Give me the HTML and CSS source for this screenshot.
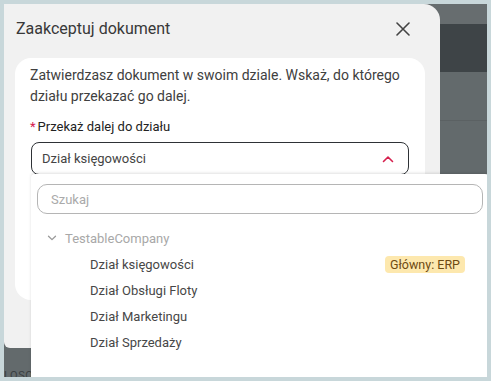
FILE: index.html
```html
<!DOCTYPE html>
<html lang="pl">
<head>
  <meta charset="UTF-8">
  <title>Zaakceptuj dokument</title>
  <link rel="stylesheet" href="styles.css">
</head>
<body>
  <div class="screen">
    <span class="behind-text">LOSO</span>

    <div class="modal">
      <div class="modal-header">
        <h2 class="modal-title">Zaakceptuj dokument</h2>
        <svg class="close" width="14" height="14" viewBox="0 0 14 14">
          <path d="M1 1 L13 13 M13 1 L1 13" stroke="#444" stroke-width="1.6" fill="none" stroke-linecap="round"/>
        </svg>
      </div>

      <div class="card">
        <p class="intro">Zatwierdzasz dokument w swoim dziale. Wskaż, do którego działu przekazać go dalej.</p>

        <label class="field-label"><span class="req">*</span>Przekaż dalej do działu</label>
        <div class="select">
          <span>Dział księgowości</span>
          <svg width="12" height="8" viewBox="0 0 12 8">
            <path d="M1.5 6.5 L6 2 L10.5 6.5" stroke="#d6204e" stroke-width="1.6" fill="none" stroke-linecap="round" stroke-linejoin="round"/>
          </svg>
        </div>
      </div>
    </div>

    <div class="dropdown">
      <div class="search">Szukaj</div>
      <div class="tree">
        <div class="tree-group">
          <svg width="10" height="6" viewBox="0 0 10 6">
            <path d="M1.5 1.2 L5 4.6 L8.5 1.2" stroke="#999" stroke-width="1.3" fill="none" stroke-linecap="round" stroke-linejoin="round"/>
          </svg>
          <span>TestableCompany</span>
        </div>
        <div class="tree-item">
          <span>Dział księgowości</span>
          <span class="badge">Główny: ERP</span>
        </div>
        <div class="tree-item"><span>Dział Obsługi Floty</span></div>
        <div class="tree-item"><span>Dział Marketingu</span></div>
        <div class="tree-item"><span>Dział Sprzedaży</span></div>
      </div>
    </div>
  </div>
</body>
</html>
```

FILE: styles.css
```css
body {
  margin: 0;
  padding: 4px;
  background: #c8d7da;
  font-family: Roboto, "Noto Sans", sans-serif;
}

.screen {
  position: relative;
  width: 483px;
  height: 373px;
  overflow: hidden;
  background: linear-gradient(to bottom,
    #676d6f 0, #676d6f 20px,
    #3e4447 20px, #3e4447 68px,
    #636a6c 68px, #636a6c 116px,
    #5b6163 116px, #5b6163 117px,
    #636a6c 117px);
}

.behind-text {
  position: absolute;
  left: 0;
  top: 366px;
  font-size: 11px;
  line-height: 12px;
  color: #3a3f41;
  letter-spacing: 0.5px;
}

/* okno modalne */
.modal {
  position: absolute;
  left: 0;
  top: 0;
  width: 436px;
  height: 344px;
  background: #f1f1f1;
  border-radius: 0 16px 0 6px;
}

.modal-header {
  display: flex;
  align-items: center;
  justify-content: space-between;
  height: 54px;
  padding: 0 30px 4px 12px;
  box-sizing: border-box;
}

.modal-title {
  margin: 0;
  font-size: 16px;
  font-weight: 400;
  color: #383838;
  line-height: 20px;
}

.card {
  margin: 0 15px 0 11px;
  height: 242px;
  background: #fff;
  border-radius: 16px;
  padding: 7px 16px 0 15px;
  box-sizing: border-box;
}

.intro {
  margin: 0;
  font-size: 14px;
  line-height: 21px;
  color: #404040;
}

.field-label {
  display: block;
  margin-top: 12px;
  font-size: 13px;
  line-height: 16px;
  color: #222;
}

.req {
  color: #d6204e;
  margin-right: 2px;
}

.select {
  display: flex;
  align-items: center;
  justify-content: space-between;
  margin-top: 7px;
  margin-left: 1px;
  height: 33px;
  padding: 0 14px 0 10px;
  border: 1px solid #2e3236;
  border-radius: 8px;
  box-sizing: border-box;
  font-size: 13px;
  color: #444;
}

/* lista rozwijana */
.dropdown {
  position: absolute;
  left: 27px;
  top: 170px;
  width: 458px;
  height: 220px;
  background: #fff;
  border-radius: 4px;
  padding: 10px 6px;
  box-sizing: border-box;
  box-shadow: 0 -1px 3px rgba(0,0,0,0.12);
}

.search {
  height: 30px;
  border: 1px solid #b5b5b5;
  border-radius: 10px;
  box-sizing: border-box;
  padding-left: 13px;
  display: flex;
  align-items: center;
  font-size: 13px;
  color: #aaa;
}

.tree {
  margin-top: 11px;
}

.tree-group {
  display: flex;
  align-items: center;
  height: 26px;
  padding-left: 10px;
  gap: 8px;
  font-size: 13px;
  color: #a8a8a8;
}

.tree-item {
  display: flex;
  align-items: center;
  justify-content: space-between;
  height: 26px;
  padding: 0 18px 0 53px;
  font-size: 13px;
  color: #474747;
}

.badge {
  background: #fde8ae;
  color: #6e4a12;
  border-radius: 4px;
  padding: 1px 5px;
  line-height: 15px;
  font-size: 12.5px;
}
```
